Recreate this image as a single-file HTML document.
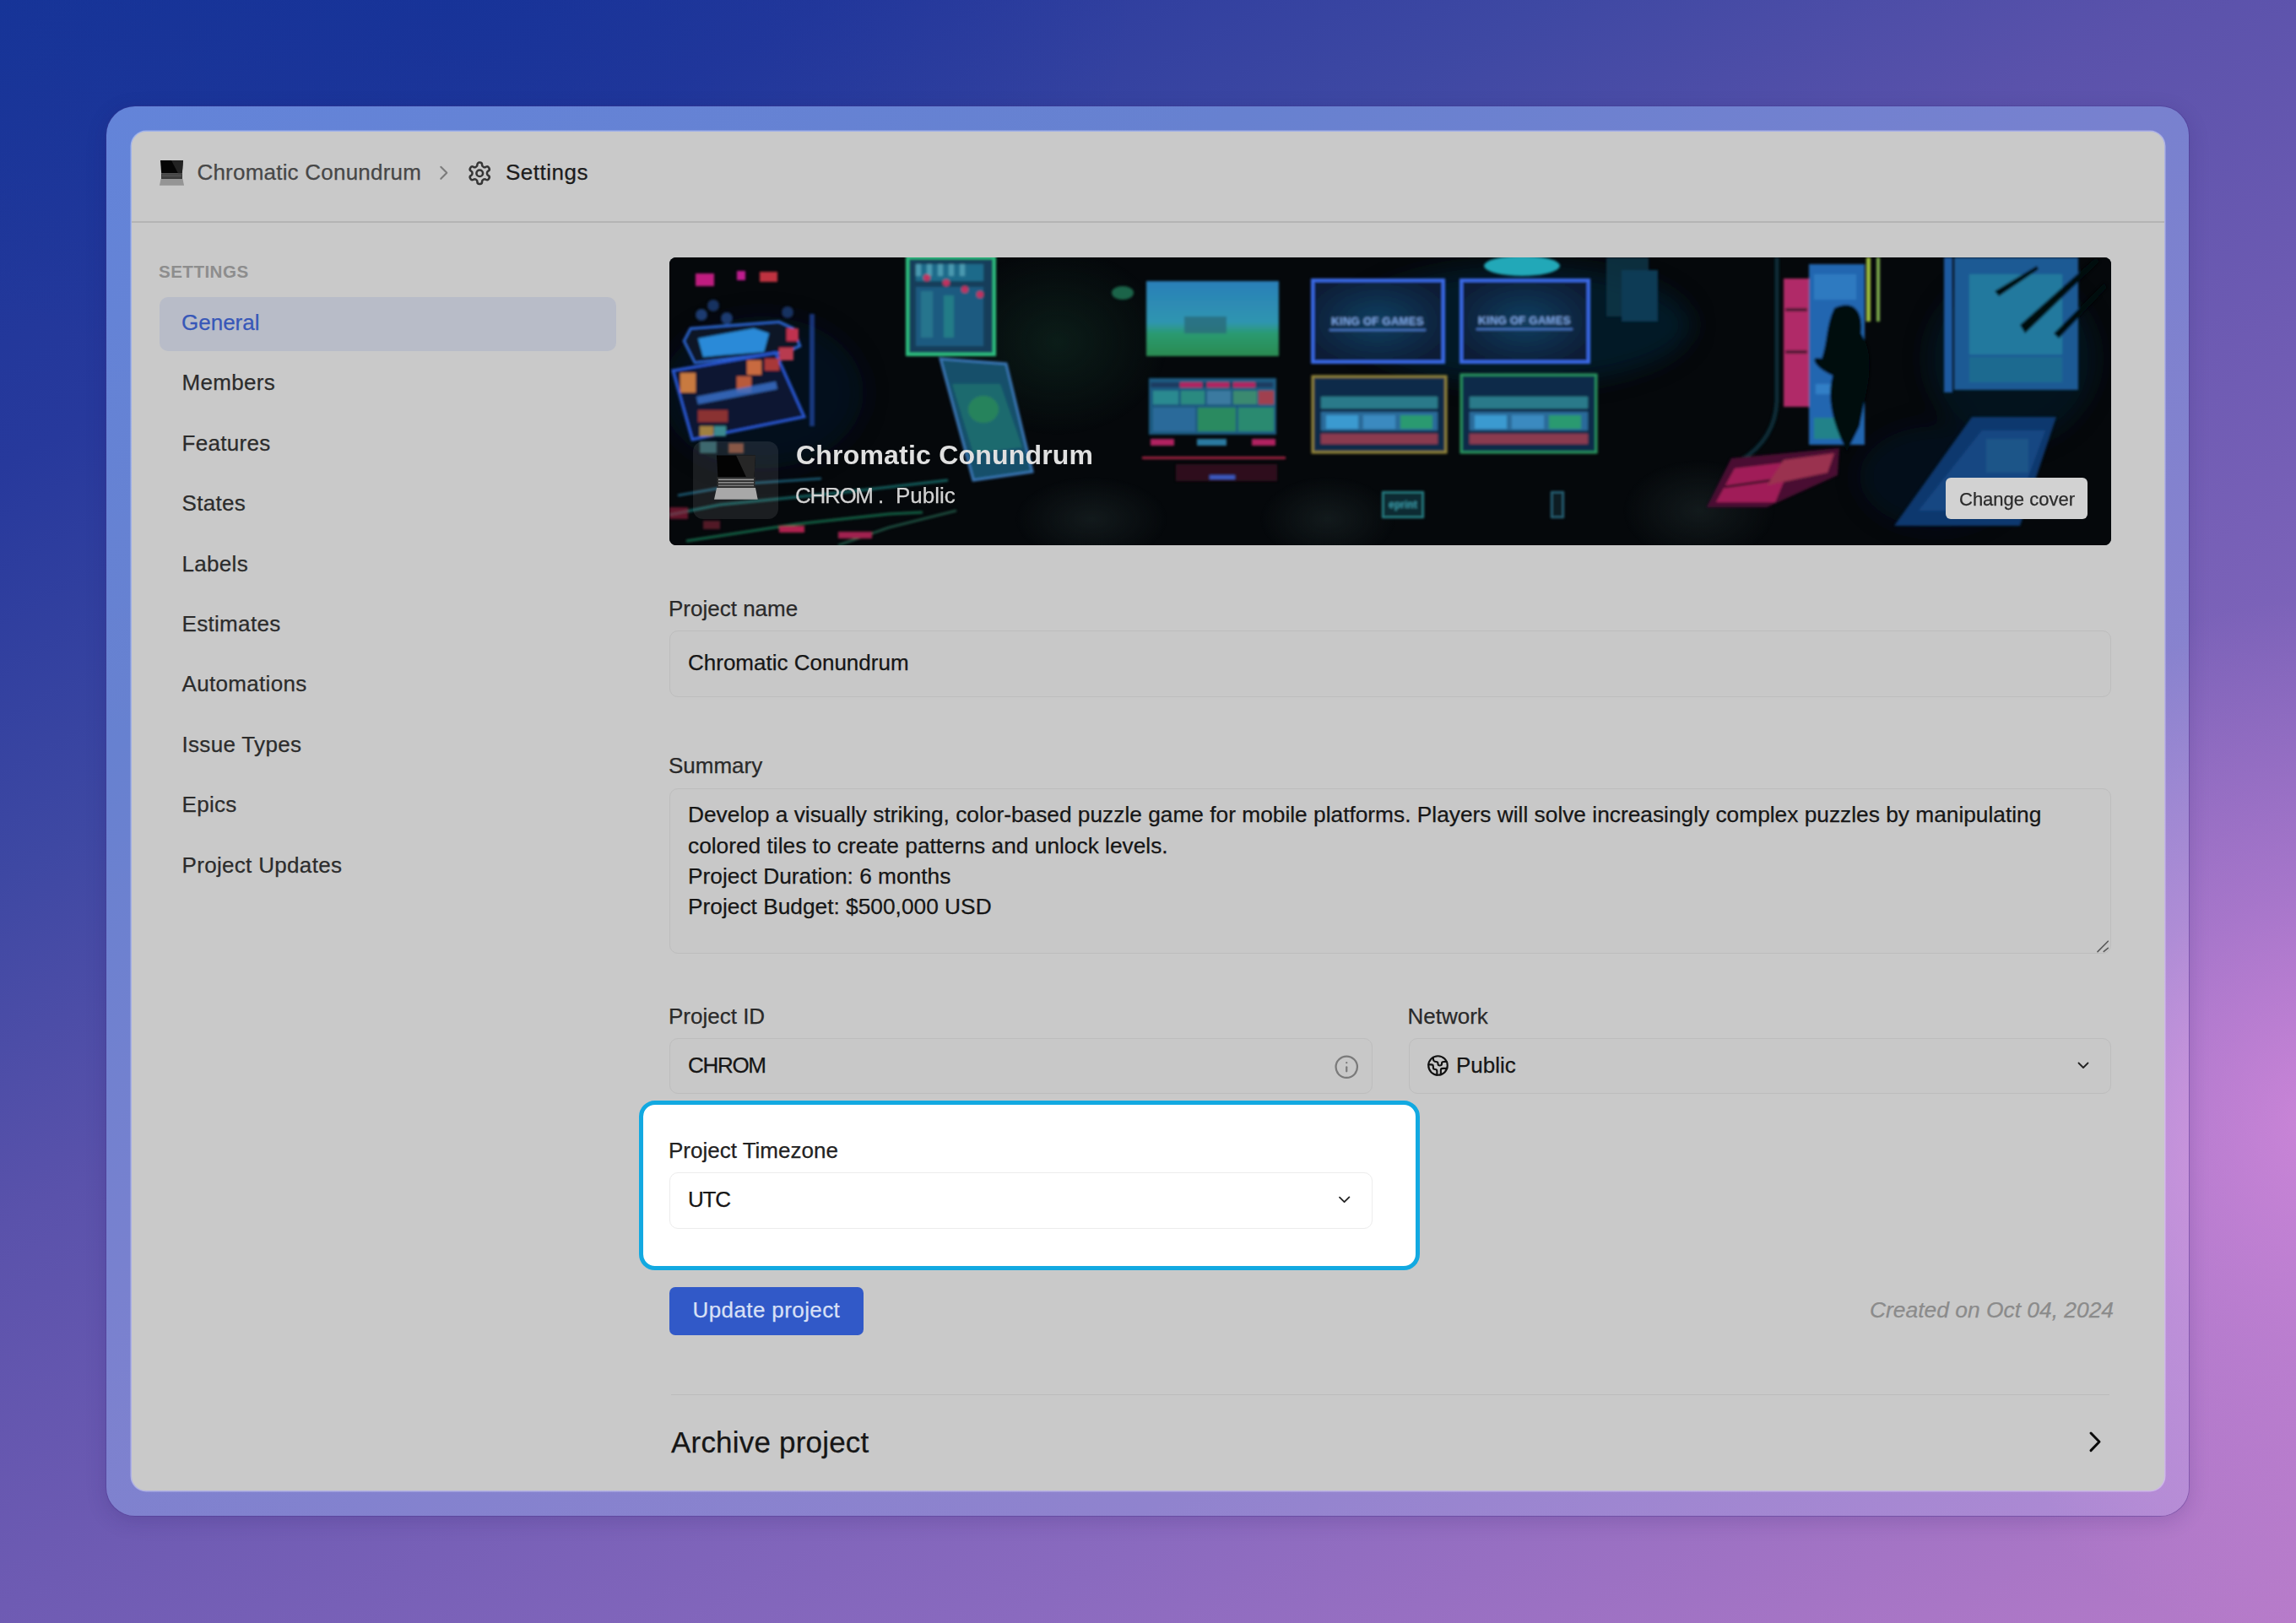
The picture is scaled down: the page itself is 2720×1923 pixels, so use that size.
<!DOCTYPE html>
<html>
<head>
<meta charset="utf-8">
<style>
html,body{margin:0;padding:0;}
body{width:2720px;height:1923px;overflow:hidden;position:relative;
  font-family:"Liberation Sans",sans-serif;
  background:
    radial-gradient(ellipse 520px 620px at 2740px 1330px, rgba(232,145,228,0.62) 0%, rgba(232,145,228,0.3) 45%, rgba(232,145,228,0) 100%),
    radial-gradient(ellipse 800px 500px at 550px 0px, rgba(12,46,150,0.45) 0%, rgba(12,46,150,0) 100%),
    linear-gradient(150.5deg, #183598 0%, #27399c 16%, #3e48a3 30%, #5a52ab 42%, #6e5bb3 55%, #8a6abf 75%, #b67bc9 100%);
}
.abs{position:absolute;}
.t{position:absolute;white-space:nowrap;line-height:1;font-size:26px;-webkit-text-stroke:0.25px currentColor;}
#frame{left:126px;top:126px;width:2467px;height:1670px;border-radius:34px;overflow:hidden;
  background:linear-gradient(150.5deg,#6384d9 0%,#6781d0 25%,#7881cf 45%,#9083ce 77%,#b08ad4 100%);
  box-shadow:0 0 0 1px rgba(70,50,140,0.35), 0 6px 24px rgba(40,20,90,0.18);}
#frame2{left:0;top:0;width:100%;height:100%;background:linear-gradient(to right,#7f83d0,#b58ad5);
  -webkit-mask-image:linear-gradient(to bottom,transparent,#000);mask-image:linear-gradient(to bottom,transparent,#000);}
#panel{left:156px;top:156px;width:2408px;height:1610px;border-radius:17px;background:#c9c9c9;overflow:hidden;box-shadow:0 0 0 1.5px rgba(235,235,255,0.45);}
.inp{position:absolute;box-sizing:border-box;border:1.5px solid #bdbdbd;border-radius:10px;background:#c8c8c8;}
</style>
</head>
<body>
<div id="frame" class="abs"><div class="abs" style="left:0;top:0;width:100%;height:100%;background:radial-gradient(ellipse 480px 600px at 2614px 1204px, rgba(240,160,230,0.8) 0%, rgba(240,160,230,0.32) 50%, rgba(235,150,225,0) 100%)"></div></div>
<div id="panel" class="abs"></div>

<!-- header -->
<!-- laptop emoji header -->
<svg class="abs" style="left:186px;top:186px" width="36" height="38" viewBox="186 186 36 38">
  <polygon points="190,190 217,190 215.8,205.5 191.2,205.5" fill="#050505"/>
  <polygon points="203,190 217,190 215.8,205.5 211,205.5" fill="#2a2a2a" opacity="0.8"/>
  <rect x="191" y="205.5" width="25" height="6.5" fill="#3c3c3c"/>
  <rect x="192" y="206.8" width="23" height="1" fill="#5a5a5a"/>
  <rect x="192" y="208.6" width="23" height="1" fill="#555"/>
  <polygon points="190.5,212 216.5,212 218,219.8 189,219.8" fill="#959595"/>
</svg>
<svg class="abs" style="left:515px;top:190px" width="22" height="30" viewBox="515 190 22 30">
  <polyline points="522.3,197.8 529.3,204.8 522.3,211.8" fill="none" stroke="#7c7c7c" stroke-width="2.1" stroke-linecap="round" stroke-linejoin="round"/>
</svg>
<svg class="abs" style="left:553.4px;top:190.1px" width="30.5" height="30.5" viewBox="0 0 24 24" fill="none" stroke="#363636" stroke-width="2" stroke-linecap="round" stroke-linejoin="round">
  <path d="M12.22 2h-.44a2 2 0 0 0-2 2v.18a2 2 0 0 1-1 1.73l-.43.25a2 2 0 0 1-2 0l-.15-.08a2 2 0 0 0-2.73.73l-.22.38a2 2 0 0 0 .73 2.730l.15.1a2 2 0 0 1 1 1.72v.51a2 2 0 0 1-1 1.74l-.15.09a2 2 0 0 0-.73 2.73l.22.38a2 2 0 0 0 2.73.73l.15-.08a2 2 0 0 1 2 0l.43.25a2 2 0 0 1 1 1.73V20a2 2 0 0 0 2 2h.44a2 2 0 0 0 2-2v-.18a2 2 0 0 1 1-1.73l.43-.25a2 2 0 0 1 2 0l.15.08a2 2 0 0 0 2.73-.73l.22-.39a2 2 0 0 0-.73-2.73l-.15-.08a2 2 0 0 1-1-1.74v-.5a2 2 0 0 1 1-1.74l.15-.09a2 2 0 0 0 .73-2.73l-.22-.38a2 2 0 0 0-2.73-.73l-.15.08a2 2 0 0 1-2 0l-.43-.25a2 2 0 0 1-1-1.73V4a2 2 0 0 0-2-2z"/>
  <circle cx="12" cy="12" r="3"/>
</svg>

<div class="abs" style="left:156px;top:262px;width:2408px;height:2px;background:#b4b4b4"></div>
<div class="t" style="left:233.4px;top:191px;color:#474747;letter-spacing:0.22px">Chromatic Conundrum</div>
<div class="t" style="left:599px;top:191px;color:#1c1c1c;letter-spacing:0.5px">Settings</div>

<!-- sidebar -->
<div class="t" style="left:188px;top:311.6px;font-size:20.6px;font-weight:700;color:#8d8d8d;-webkit-text-stroke:0;letter-spacing:0.45px">SETTINGS</div>
<div class="abs" style="left:189px;top:352px;width:541px;height:64px;border-radius:10px;background:#b8bcc8"></div>
<div class="t" style="left:215px;top:369px;color:#3757b8">General</div>
<div class="t" style="left:215.5px;top:440.4px;color:#2c2c2c;letter-spacing:0.32px">Members</div>
<div class="t" style="left:215.5px;top:511.8px;color:#2c2c2c;letter-spacing:0.32px">Features</div>
<div class="t" style="left:215.5px;top:583.2px;color:#2c2c2c;letter-spacing:0.32px">States</div>
<div class="t" style="left:215.5px;top:654.6px;color:#2c2c2c;letter-spacing:0.32px">Labels</div>
<div class="t" style="left:215.5px;top:726px;color:#2c2c2c;letter-spacing:0.32px">Estimates</div>
<div class="t" style="left:215.5px;top:797.4px;color:#2c2c2c;letter-spacing:0.32px">Automations</div>
<div class="t" style="left:215.5px;top:868.8px;color:#2c2c2c;letter-spacing:0.32px">Issue Types</div>
<div class="t" style="left:215.5px;top:940.2px;color:#2c2c2c;letter-spacing:0.32px">Epics</div>
<div class="t" style="left:215.5px;top:1011.6px;color:#2c2c2c;letter-spacing:0.32px">Project Updates</div>

<!-- cover -->
<div id="cover" class="abs" style="left:793px;top:305px;width:1708px;height:341px;border-radius:8px;background:#06090c;overflow:hidden">
<svg class="abs" style="left:0;top:0" width="1708" height="341" viewBox="0 0 1708 341">
<defs>
  <filter id="b1" x="-20%" y="-20%" width="140%" height="140%"><feGaussianBlur stdDeviation="1.6"/></filter>
  <filter id="b4" x="-50%" y="-50%" width="200%" height="200%"><feGaussianBlur stdDeviation="6"/></filter>
  <filter id="b10" x="-50%" y="-50%" width="200%" height="200%"><feGaussianBlur stdDeviation="14"/></filter>
  <linearGradient id="sky" x1="0" y1="0" x2="0" y2="1">
    <stop offset="0" stop-color="#2a7fb8"/><stop offset="0.55" stop-color="#2f95b0"/><stop offset="0.7" stop-color="#2a9a70"/><stop offset="1" stop-color="#2a8a50"/>
  </linearGradient>
  <radialGradient id="kog" cx="0.5" cy="0.5" r="0.6">
    <stop offset="0" stop-color="#123e60"/><stop offset="1" stop-color="#0a1c34"/>
  </radialGradient>
</defs>
<rect width="1708" height="341" fill="#05080b"/>
<g filter="url(#b10)">
  <ellipse cx="110" cy="160" rx="120" ry="90" fill="#0c2040" opacity="0.35"/>
  <ellipse cx="1010" cy="80" rx="200" ry="70" fill="#0a2a40" opacity="0.5"/>
  <ellipse cx="1590" cy="120" rx="100" ry="100" fill="#0a2a48" opacity="0.3"/>
  <ellipse cx="1500" cy="260" rx="90" ry="60" fill="#0a2040" opacity="0.3"/>
</g>
<defs>
  <radialGradient id="rg_green"><stop offset="0" stop-color="#0c1f1a" stop-opacity="0.9"/><stop offset="1" stop-color="#0c1f1a" stop-opacity="0"/></radialGradient>
  <radialGradient id="rg_gray"><stop offset="0" stop-color="#141c1e" stop-opacity="0.9"/><stop offset="1" stop-color="#141c1e" stop-opacity="0"/></radialGradient>
</defs>
<ellipse cx="460" cy="100" rx="130" ry="110" fill="url(#rg_green)"/>
<ellipse cx="500" cy="310" rx="90" ry="50" fill="url(#rg_gray)"/>
<ellipse cx="780" cy="310" rx="80" ry="50" fill="url(#rg_gray)"/>
<ellipse cx="1220" cy="300" rx="90" ry="60" fill="url(#rg_gray)"/>
<g filter="url(#b1)">
  <!-- section 1 -->
  <rect x="31" y="19" width="22" height="15" fill="#c01a80"/>
  <rect x="80" y="16" width="10" height="11" fill="#c01a90"/>
  <rect x="107" y="17" width="21" height="12" fill="#c03040"/>
  <circle cx="38" cy="68" r="7" fill="#1a3a70"/>
  <circle cx="52" cy="57" r="7" fill="#163060"/>
  <circle cx="68" cy="72" r="7" fill="#1a3a70"/>
  <circle cx="140" cy="65" r="7" fill="#163060"/>
  <polygon points="17,99 25,84 130,76 147,84 155,105 140,112 30,125" fill="#0a1628" stroke="#2f6ad8" stroke-width="2.5"/>
  <polygon points="34,96 100,84 118,90 112,112 60,116 40,118" fill="#2a8ad8"/>
  <rect x="139" y="84" width="14" height="15" fill="#c03050"/>
  <polygon points="4,134 126,113 160,189 27,216" fill="#0c1630" stroke="#2a5ad8" stroke-width="3"/>
  <rect x="13" y="137" width="18" height="23" fill="#c87a40"/>
  <rect x="92" y="122" width="17" height="17" fill="#c86a40"/>
  <rect x="80" y="141" width="17" height="19" fill="#b85a3a"/>
  <rect x="113" y="120" width="17" height="14" fill="#a83838"/>
  <rect x="130" y="107" width="17" height="15" fill="#b83a50"/>
  <polygon points="32,165 126,147 128,156 34,174" fill="#3a70c8" opacity="0.85"/>
  <rect x="34" y="181" width="35" height="14" fill="#8a3030"/>
  <rect x="36" y="200" width="16" height="12" fill="#a08040"/>
  <rect x="53" y="200" width="14" height="12" fill="#3a8a90"/>
  <rect x="36" y="218" width="20" height="14" fill="#3a7a80" opacity="0.7"/>
  <rect x="70" y="220" width="18" height="12" fill="#b06040" opacity="0.7"/>
  <rect x="166" y="67" width="6" height="133" fill="#2a5ad0" opacity="0.55"/>
  <rect x="282" y="0" width="103" height="115" fill="#143e5a" stroke="#2ec080" stroke-width="4"/>
  <rect x="292" y="8" width="80" height="20" fill="#1a6a8a"/>
  <rect x="292" y="35" width="80" height="70" fill="#1a5a80"/><rect x="298" y="40" width="14" height="55" fill="#2a7a90" opacity="0.8"/><rect x="325" y="45" width="12" height="50" fill="#2a8a8a" opacity="0.7"/><rect x="292" y="8" width="6" height="14" fill="#4a9ab0"/><rect x="305" y="8" width="6" height="14" fill="#4a9ab0"/><rect x="318" y="8" width="6" height="14" fill="#4a9ab0"/><rect x="331" y="8" width="6" height="14" fill="#4a9ab0"/><rect x="344" y="8" width="6" height="14" fill="#4a9ab0"/>
  <circle cx="305" cy="24" r="4" fill="#c03060"/><circle cx="328" cy="30" r="4" fill="#c03060"/><circle cx="350" cy="38" r="4" fill="#c03060"/><circle cx="368" cy="44" r="4" fill="#c03060"/>
  <polygon points="321,120 399,126 430,254 360,264" fill="#13506a" stroke="#3a78b8" stroke-width="3"/>
  <polygon points="335,150 392,150 418,225 360,232" fill="#1b6a6e"/><ellipse cx="372" cy="180" rx="18" ry="16" fill="#2a8a58" opacity="0.8"/>
  
  <ellipse cx="537" cy="42" rx="13" ry="8" fill="#1f7a58" opacity="0.8"/>
  <polyline points="0,305 60,293 200,279 330,264" fill="none" stroke="#1d7a78" stroke-width="3" opacity="0.8"/><polyline points="10,282 90,268 180,262" fill="none" stroke="#2a8ab0" stroke-width="2.5" opacity="0.7"/>
  <polyline points="20,336 150,316 260,304 300,302" fill="none" stroke="#1d8a60" stroke-width="3" opacity="0.7"/><polyline points="200,341 260,320 340,300" fill="none" stroke="#2a7a60" stroke-width="2.5" opacity="0.7"/>
  <rect x="130" y="318" width="30" height="8" fill="#b02050"/>
  <rect x="200" y="325" width="40" height="8" fill="#a02050"/>
  <rect x="0" y="296" width="22" height="14" fill="#a02040" opacity="0.6"/><rect x="40" y="312" width="20" height="10" fill="#a02a40" opacity="0.5"/>
  <!-- section 2 -->
  <rect x="565" y="28" width="157" height="89" fill="url(#sky)"/>
  <rect x="610" y="70" width="50" height="20" fill="#2a6a7a" opacity="0.8"/>
  <rect x="568" y="143" width="151" height="67" fill="#1a5a80"/>
  <rect x="573" y="158" width="30" height="16" fill="#2a8a90"/><rect x="606" y="158" width="28" height="16" fill="#2a8a80"/><rect x="637" y="158" width="28" height="16" fill="#3a7aa0"/><rect x="668" y="158" width="28" height="16" fill="#3a8a70"/><rect x="698" y="158" width="18" height="16" fill="#a04050"/>
  <rect x="573" y="178" width="50" height="28" fill="#2a6a9a"/><rect x="626" y="178" width="45" height="28" fill="#2a8a60"/><rect x="674" y="178" width="42" height="28" fill="#2a8a70"/>
  <rect x="570" y="148" width="145" height="6" fill="#1a3a60"/>
  <rect x="605" y="148" width="26" height="6" fill="#b02060"/><rect x="637" y="148" width="26" height="6" fill="#b02060"/><rect x="668" y="148" width="26" height="6" fill="#b02060"/>
  <rect x="570" y="215" width="28" height="8" fill="#b02060"/><rect x="625" y="215" width="35" height="8" fill="#2a7aa0"/><rect x="690" y="215" width="28" height="8" fill="#b02060"/>
  <rect x="560" y="236" width="170" height="3" fill="#a02040"/>
  <rect x="600" y="245" width="120" height="20" fill="#3a0a20" opacity="0.8"/>
  <rect x="640" y="258" width="30" height="5" fill="#3a5ac0"/>
  <rect x="762" y="27" width="155" height="97" fill="url(#kog)" stroke="#3a6ae8" stroke-width="4"/>
  <rect x="938" y="27" width="151" height="97" fill="url(#kog)" stroke="#3a6ae8" stroke-width="4"/>
  <text x="839" y="80" font-family="Liberation Sans" font-weight="700" font-size="13" letter-spacing="0.3" fill="#7aa4e4" text-anchor="middle">KING OF GAMES</text><rect x="782" y="85" width="114" height="2" fill="#4a78c8"/>
  <text x="1013" y="79" font-family="Liberation Sans" font-weight="700" font-size="13" letter-spacing="0.3" fill="#7aa4e4" text-anchor="middle">KING OF GAMES</text><rect x="956" y="84" width="114" height="2" fill="#4a78c8"/>
  <rect x="762" y="141" width="158" height="90" fill="#0e2a48" stroke="#9a8a3a" stroke-width="3"/>
  <rect x="938" y="139" width="160" height="92" fill="#0e2a48" stroke="#2a9a60" stroke-width="3"/>
  <rect x="772" y="165" width="138" height="14" fill="#2a7a8a"/><rect x="772" y="183" width="138" height="22" fill="#2a6a9a"/><rect x="772" y="209" width="138" height="12" fill="#8a3a50"/>
  <rect x="948" y="165" width="140" height="14" fill="#2a7a8a"/><rect x="948" y="183" width="140" height="22" fill="#2a6a9a"/><rect x="948" y="209" width="140" height="12" fill="#8a3a50"/>
  <rect x="778" y="187" width="38" height="16" fill="#3a9ad0"/><rect x="822" y="187" width="38" height="16" fill="#3a8ac0"/><rect x="866" y="187" width="38" height="16" fill="#2a9a70"/>
  <rect x="954" y="187" width="38" height="16" fill="#3a9ad0"/><rect x="998" y="187" width="38" height="16" fill="#3a8ac0"/><rect x="1042" y="187" width="38" height="16" fill="#2a9a70"/>
  <ellipse cx="1010" cy="10" rx="45" ry="12" fill="#20a8b8"/>
  <rect x="845" y="278" width="48" height="30" fill="#0a2a30" stroke="#2a8a90" stroke-width="2"/><text x="869" y="297" font-family="Liberation Sans" font-weight="700" font-size="12" fill="#3a9aa8" text-anchor="middle">eprint</text>
  <rect x="1045" y="278" width="14" height="30" fill="#0a1a20" stroke="#2a6a80" stroke-width="2"/>
  <rect x="1110" y="0" width="50" height="70" fill="#0a3a4a" opacity="0.8"/>
  <!-- section 3 -->
  <rect x="1128" y="15" width="43" height="61" fill="#0c3a55"/>
  <rect x="1320" y="25" width="30" height="152" fill="#b02a68"/><rect x="1322" y="60" width="26" height="4" fill="#05080b" opacity="0.6"/><rect x="1322" y="110" width="26" height="4" fill="#05080b" opacity="0.6"/>
  <rect x="1350" y="8" width="66" height="214" fill="#2466b0"/>
  <rect x="1356" y="20" width="50" height="30" fill="#2f7ac0"/><rect x="1358" y="150" width="40" height="12" fill="#3a8ad0" opacity="0.7"/><rect x="1356" y="190" width="40" height="25" fill="#1f8a80" opacity="0.8"/>
  <path d="M1312,0 L1312,170 Q1310,215 1270,240" fill="none" stroke="#0e3a4a" stroke-width="5" opacity="0.7"/>
  <rect x="1418" y="0" width="5" height="76" fill="#a0c040"/>
  <rect x="1430" y="0" width="4" height="76" fill="#80b050"/>
  <path d="M1380,60 C1400,50 1415,60 1412,90 C1430,120 1420,150 1410,200 L1395,230 C1380,200 1370,170 1378,140 C1355,130 1350,115 1365,120 C1372,100 1370,80 1380,60 Z" fill="#05080b"/>
  <polygon points="1229,296 1258,238 1386,226 1384,258 1300,296" fill="#4a1030"/>
  <polygon points="1240,290 1262,250 1330,242 1310,290" fill="#a01c58"/><polyline points="1250,272 1320,262" stroke="#05080b" stroke-width="3" opacity="0.6"/>
  <polygon points="1300,270 1320,240 1380,232 1372,255" fill="#9a3050"/>
  <rect x="1522" y="0" width="147" height="157" fill="#1a5a94"/>
  <rect x="1540" y="20" width="110" height="95" fill="#23799e"/>
  <rect x="1540" y="118" width="110" height="30" fill="#1a6a90"/>
  <polygon points="1451,318 1543,189 1643,189 1600,318" fill="#10386e"/>
  <polygon points="1480,300 1555,205 1630,205 1595,300" fill="#164682"/><rect x="1560" y="215" width="50" height="40" fill="#1f5a8a" opacity="0.7"/>
  <path d="M1600,80 L1690,0 L1694,5 L1606,90 Z" fill="#05080b"/><path d="M1570,40 L1620,10 L1622,14 L1575,46 Z" fill="#05080b"/>
  <path d="M1640,90 L1700,30 L1703,36 L1646,96 Z" fill="#05080b"/>
  <rect x="1510" y="0" width="10" height="160" fill="#1a5aa0"/>
</g>
</svg>

<div class="abs" style="left:28px;top:218px;width:101px;height:92px;border-radius:12px;background:rgba(255,255,255,0.09)"></div>
<svg class="abs" style="left:0;top:0" width="1708" height="341" viewBox="793 305 1708 341">
  <polygon points="849,539.6 895,539.6 893.5,565.3 850.5,565.3" fill="#030303"/>
  <polygon points="872,539.6 895,539.6 893.5,565.3 884,565.3" fill="#262626"/>
  <rect x="849.5" y="565.3" width="45" height="13" fill="#2e2e2e"/>
  <rect x="851" y="567.5" width="42" height="1.6" fill="#9a9a9a"/>
  <rect x="851" y="571" width="42" height="1.6" fill="#8a8a8a"/>
  <rect x="851" y="574.5" width="42" height="1.6" fill="#7a7a7a"/>
  <polygon points="849,578 895,578 897.7,591.7 846,591.7" fill="#a8a8a8"/>
</svg>
</div>
<div class="t" style="left:943px;top:522.9px;font-size:32px;font-weight:700;color:#e0e0e0;-webkit-text-stroke:0;letter-spacing:0.2px">Chromatic Conundrum</div>
<div class="t" style="left:942px;top:574px;color:#d2d2d2;letter-spacing:-1.3px">CHROM</div><div class="t" style="left:1040px;top:574px;color:#d2d2d2">.</div><div class="t" style="left:1061px;top:574px;color:#d2d2d2">Public</div>
<div class="abs" style="left:2305px;top:566px;width:168px;height:49px;border-radius:6px;background:#d2d2d2"></div>
<div class="t" style="left:2321px;top:580.8px;font-size:22px;color:#2a2a2a">Change cover</div>

<!-- form -->
<div class="t" style="left:792px;top:707.6px;color:#2a2a2a">Project name</div>
<div class="inp" style="left:793px;top:747px;width:1708px;height:79px"></div>
<div class="t" style="left:815px;top:772.2px;color:#161616">Chromatic Conundrum</div>

<div class="t" style="left:792px;top:894.1px;color:#2a2a2a">Summary</div>
<div class="inp" style="left:793px;top:934px;width:1708px;height:196px"></div>
<div class="t" style="left:815px;top:952.2px;color:#161616;font-size:26.3px">Develop a visually striking, color-based puzzle game for mobile platforms. Players will solve increasingly complex puzzles by manipulating</div>
<div class="t" style="left:815px;top:988.6px;color:#161616;font-size:26.3px">colored tiles to create patterns and unlock levels.</div>
<div class="t" style="left:815px;top:1024.9px;color:#161616;font-size:26.3px">Project Duration: 6 months</div>
<div class="t" style="left:815px;top:1061.2px;color:#161616;font-size:26.3px">Project Budget: $500,000 USD</div>

<div class="t" style="left:792px;top:1191px;color:#2a2a2a">Project ID</div>
<div class="inp" style="left:793px;top:1230px;width:833px;height:66px"></div>
<div class="t" style="left:815px;top:1248.8px;color:#161616;letter-spacing:-1.3px">CHROM</div>

<div class="t" style="left:1667.5px;top:1191px;color:#2a2a2a">Network</div>
<div class="inp" style="left:1669px;top:1230px;width:832px;height:66px"></div>
<div class="t" style="left:1725px;top:1249px;color:#161616">Public</div>


<svg class="abs" style="left:1580.25px;top:1249.45px" width="30.5" height="30.5" viewBox="0 0 24 24" fill="none" stroke="#7a7a7a" stroke-width="1.75" stroke-linecap="round" stroke-linejoin="round">
  <circle cx="12" cy="12" r="10"/><path d="M12 16v-4"/><path d="M12 8h.01"/>
</svg>
<svg class="abs" style="left:1690.1px;top:1248.8px" width="27" height="27" viewBox="0 0 24 24" fill="none" stroke="#111" stroke-width="1.9" stroke-linecap="round" stroke-linejoin="round">
  <path d="M21.54 15H17a2 2 0 0 0-2 2v4.54"/><path d="M7 3.34V5a3 3 0 0 0 3 3a2 2 0 0 1 2 2c0 1.1.9 2 2 2a2 2 0 0 0 2-2c0-1.1.9-2 2-2h3.17"/><path d="M11 21.95V18a2 2 0 0 0-2-2a2 2 0 0 1-2-2v-1a2 2 0 0 0-2-2H2.05"/><circle cx="12" cy="12" r="10"/>
</svg>
<svg class="abs" style="left:2455px;top:1250px" width="26" height="24" viewBox="2455 1250 26 24">
  <polyline points="2462.5,1259.5 2468,1265 2473.5,1259.5" fill="none" stroke="#222" stroke-width="1.8" stroke-linecap="round" stroke-linejoin="round"/>
</svg>
<svg class="abs" style="left:2478px;top:1108px" width="26" height="26" viewBox="2478 1108 26 26">
  <line x1="2485" y1="1127.6" x2="2497.3" y2="1115.2" stroke="#5a5a5a" stroke-width="1.6" stroke-linecap="round"/>
  <line x1="2492.3" y1="1127.4" x2="2497.3" y2="1123.3" stroke="#5a5a5a" stroke-width="1.6" stroke-linecap="round"/>
</svg>
<!-- highlight -->
<div class="abs" style="left:757px;top:1304px;width:925px;height:201px;box-sizing:border-box;border:5.8px solid #12a9e1;border-radius:19px;background:#ffffff"></div>
<div class="t" style="left:792px;top:1350px;color:#222">Project Timezone</div>
<div class="inp" style="left:793px;top:1389px;width:833px;height:67px;background:#fff;border-color:#ececec"></div>
<div class="t" style="left:815px;top:1407.6px;color:#161616;letter-spacing:-1.2px">UTC</div>


<svg class="abs" style="left:1580px;top:1408px" width="26" height="24" viewBox="1580 1408 26 24">
  <polyline points="1587,1418.6 1592.6,1424.2 1598.4,1418.4" fill="none" stroke="#222" stroke-width="1.8" stroke-linecap="round" stroke-linejoin="round"/>
</svg>
<svg class="abs" style="left:2468px;top:1690px" width="28" height="36" viewBox="2468 1690 28 36">
  <polyline points="2477,1698 2487,1708.3 2477,1718.6" fill="none" stroke="#0c0c0c" stroke-width="3" stroke-linecap="round" stroke-linejoin="round"/>
</svg>
<div class="abs" style="left:793px;top:1525px;width:230px;height:57px;border-radius:7px;background:#3159c8"></div>
<div class="t" style="left:820.5px;top:1538.6px;color:#d8e0f6;letter-spacing:0.4px">Update project</div>
<div class="t" style="left:2215px;top:1538.9px;font-size:26.4px;font-style:italic;color:#8b8b8b">Created on Oct 04, 2024</div>

<div class="abs" style="left:795px;top:1652px;width:1704px;height:1px;background:#bcbcbc"></div>
<div class="t" style="left:795px;top:1691.4px;font-size:35px;color:#161616;letter-spacing:0.2px">Archive project</div>

</body>
</html>
